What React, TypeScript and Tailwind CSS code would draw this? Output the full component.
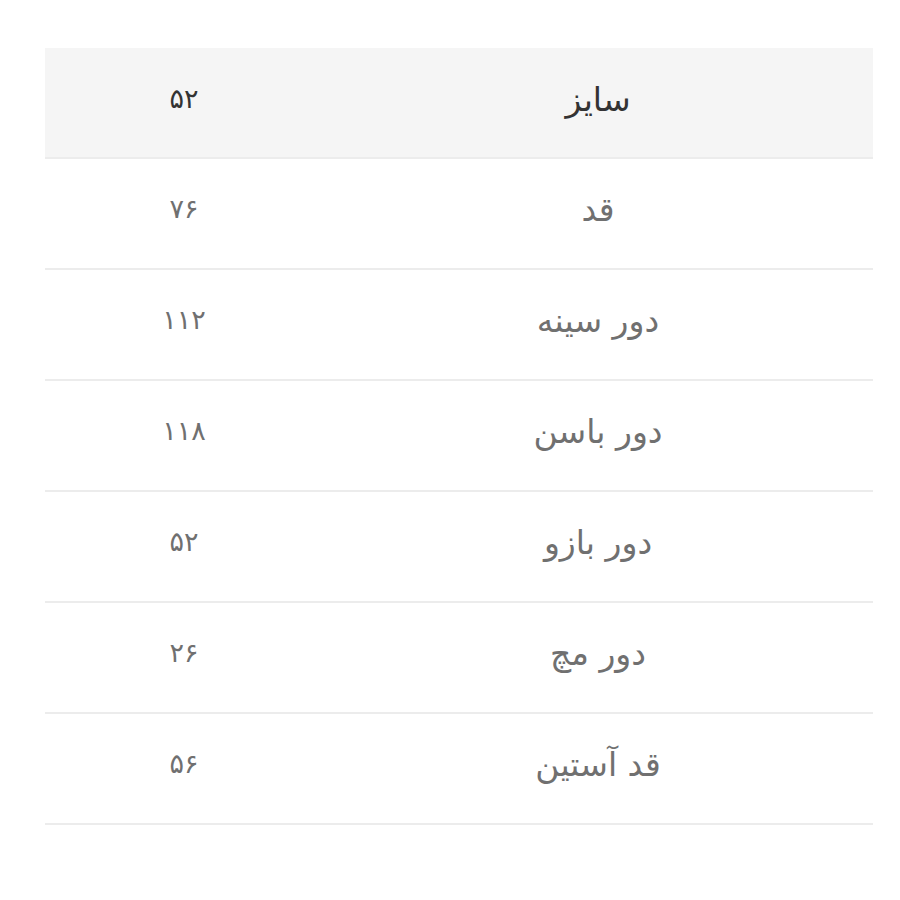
import React from 'react';

const rows = [
  { label: 'قد', value: '۷۶' },
  { label: 'دور سینه', value: '۱۱۲' },
  { label: 'دور باسن', value: '۱۱۸' },
  { label: 'دور بازو', value: '۵۲' },
  { label: 'دور مچ', value: '۲۶' },
  { label: 'قد آستین', value: '۵۶' },
];

const App = () => {
  return (
    <div
      dir="rtl"
      className="min-h-[900px] bg-white pt-[48px] pl-[45px] pr-[27px]"
      style={{ fontFamily: '"DejaVu Sans", "Noto Sans", sans-serif' }}
    >
      <table className="w-[828px] border-collapse text-[27px]">
        <thead>
          <tr className="h-[110px] bg-[#f5f5f5] border-b-2 border-[#ececec] text-[#333]">
            <th className="w-[550px] text-center font-normal text-[33px] pb-[6px]">سایز</th>
            <th className="text-center font-normal pb-[6px]">۵۲</th>
          </tr>
        </thead>
        <tbody>
          {rows.map((row) => (
            <tr key={row.label} className="h-[111px] border-b-2 border-[#ececec] text-[#707070]">
              <td className="text-center text-[33px] pb-[8px]">{row.label}</td>
              <td className="text-center pb-[8px]">{row.value}</td>
            </tr>
          ))}
        </tbody>
      </table>
    </div>
  );
};

export default App;
